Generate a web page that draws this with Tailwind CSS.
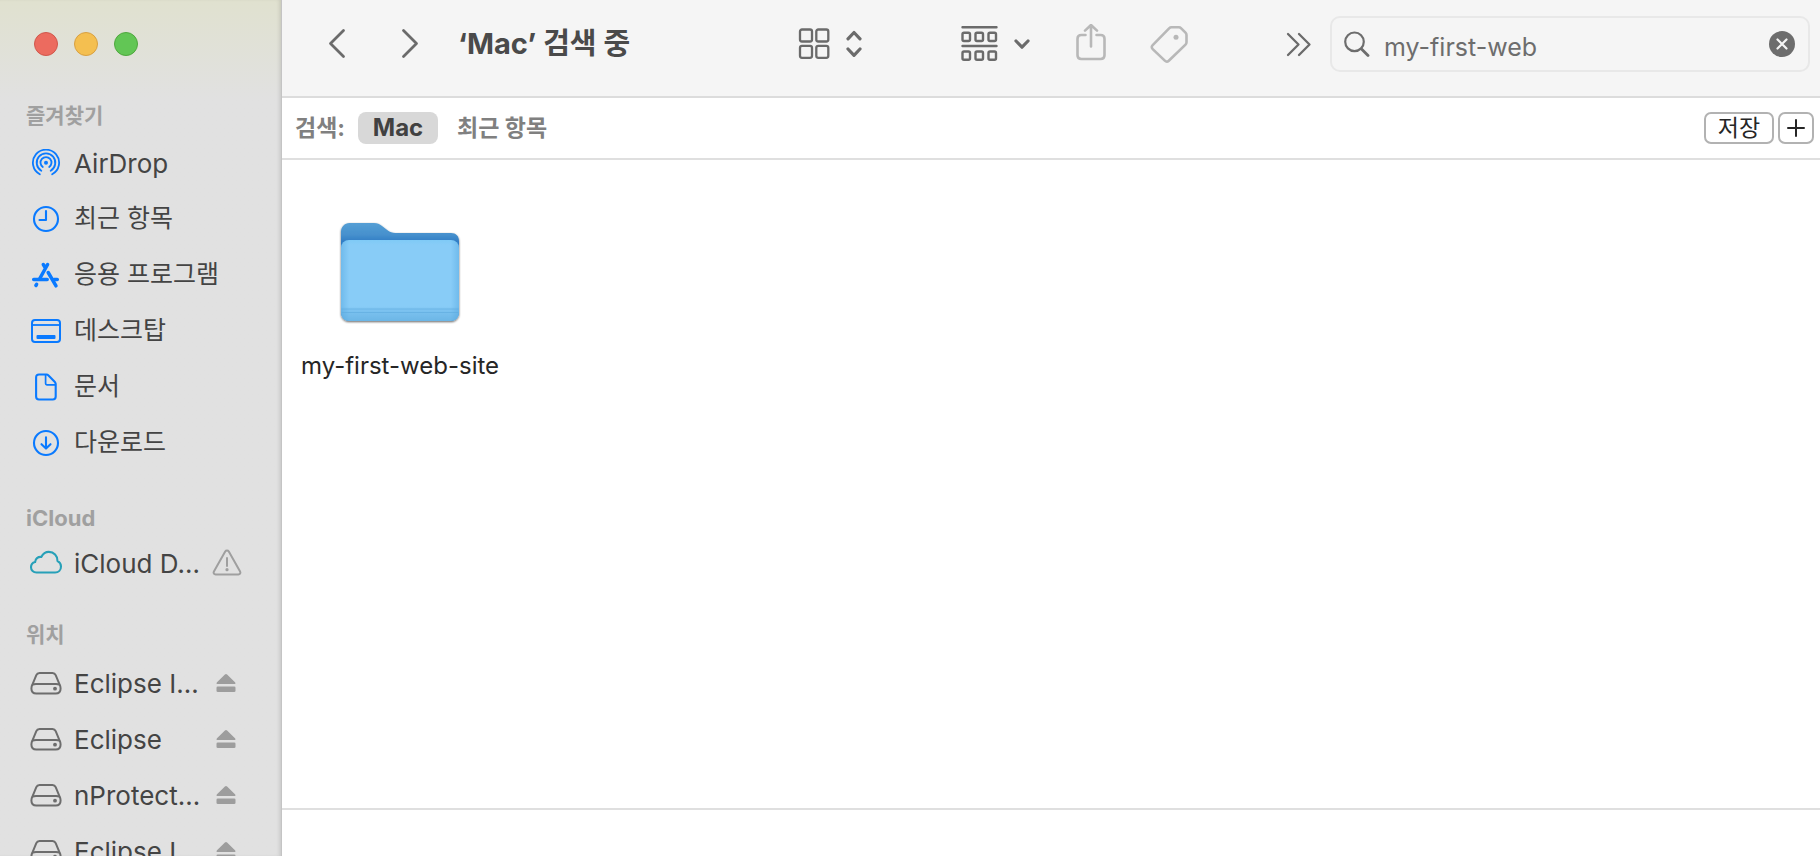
<!DOCTYPE html>
<html lang="ko">
<head>
    <meta charset="UTF-8">
    <meta name="viewport" content="width=device-width, initial-scale=1.0">
    <script src="https://cdn.jsdelivr.net/npm/@tailwindcss/browser@4"></script>
    <title>‘Mac’ 검색 중</title>
</head>
<body class="flex h-screen overflow-hidden bg-white font-['Inter','Noto_Sans_CJK_KR',sans-serif] text-[#444444]">

    <!-- shared icons -->
    <svg class="hidden">
        <symbol id="disk" viewBox="0 0 32 24" fill="none" stroke="#6d6d6d" stroke-width="2">
            <path d="M9.500 2h13c1.600 0 2.600.8 3.200 2.200l4 9.600c.6 1.200.9 2.400.9 3.600 0 3-1.800 5.100-4.900 5.100H6.300c-3.100 0-4.900-2.100-4.900-5.100 0-1.200.3-2.400.9-3.600l4-9.600C6.900 2.800 7.900 2 9.500 2z" />
            <path d="M2.500 13.500C3.500 13 4.500 13 6 13h20c1.500 0 2.500 0 3.500.5" />
            <circle cx="25" cy="17.700" r="1.900" fill="#6d6d6d" stroke="none" />
        </symbol>
        <symbol id="eject" viewBox="0 0 20 20" fill="#9d9d9d">
            <path d="M8.900 1.400 1 9.200c-.9.900-.5 1.800.6 1.800h16.800c1.100 0 1.500-.9.600-1.800l-7.900-7.800c-.7-.7-1.500-.7-2.200 0z" />
            <rect x="0.500" y="13.500" width="19" height="5.500" rx="1.300" />
        </symbol>
    </svg>

    <aside class="w-[282px] shrink-0 border-r border-[#c4c4c4] bg-[#e1e1e1] bg-linear-to-b from-[#e0e1cf] to-[#e1e1e1] to-[100px] shadow-[inset_-3px_0_4px_-2px_#00000022]">
        <div class="flex h-[99px] gap-4 pt-8 pl-[34px]">
            <button aria-label="닫기" class="size-6 rounded-full border border-[#d0574c] bg-[#ec6b5f]"></button>
            <button aria-label="최소화" class="size-6 rounded-full border border-[#d8a042] bg-[#f4bf50]"></button>
            <button aria-label="확대" class="size-6 rounded-full border border-[#4fa73e] bg-[#62c655]"></button>
        </div>

        <nav class="flex flex-col gap-7">
            <section>
                <h2 class="h-9 pl-[26px] text-[21px] leading-[34px] font-bold text-[#a0a0a0]">즐겨찾기</h2>
                <ul class="text-[25px]">
                    <li><a href="#" class="flex h-14 items-center gap-3 pl-[30px] text-[26px]">
                        <svg class="h-7 w-8" viewBox="0 0 32 28" fill="none" stroke="#0a7aff" stroke-width="1.800" stroke-linecap="round">
                            <path d="M9.800 25.300a13.100 13.100 0 1 1 12.400 0" />
                            <path d="M11.300 21.700a9.300 9.300 0 1 1 9.400 0" />
                            <path d="M12.800 18a5.500 5.500 0 1 1 6.400 0" />
                            <circle cx="16" cy="13.700" r="2" fill="#0a7aff" stroke="none" />
                        </svg>
                        <span>AirDrop</span>
                    </a></li>
                    <li><a href="#" class="flex h-14 items-center gap-3 pl-[30px]">
                        <svg class="h-7 w-8" viewBox="0 0 32 28" fill="none" stroke="#0a7aff" stroke-width="2.100" stroke-linecap="round" stroke-linejoin="round">
                            <circle cx="16" cy="14" r="12" />
                            <path d="M16 6v9H9.500" />
                        </svg>
                        <span>최근 항목</span>
                    </a></li>
                    <li><a href="#" class="flex h-14 items-center gap-3 pl-[30px]">
                        <svg class="h-7 w-8" viewBox="0 0 32 28" fill="none" stroke="#0a7aff" stroke-width="3.500" stroke-linecap="round">
                            <path d="M17.600 3.500 9.800 17.500M13.300 3.500l2 3.200M18.200 11.500l7.800 13.300" />
                            <path d="M3.700 18.500h13.500M24 18.500h3.300M6.600 23.300l-.7 1.200" />
                        </svg>
                        <span>응용 프로그램</span>
                    </a></li>
                    <li><a href="#" class="flex h-14 items-center gap-3 pl-[30px]">
                        <svg class="h-7 w-8" viewBox="0 0 32 28" fill="none" stroke="#0a7aff" stroke-width="2">
                            <rect x="2" y="3" width="28" height="22" rx="3" />
                            <path d="M2 8h28" stroke-width="1.800" />
                            <rect x="6.500" y="18" width="19" height="4" rx="1" fill="#0a7aff" stroke="none" />
                        </svg>
                        <span>데스크탑</span>
                    </a></li>
                    <li><a href="#" class="flex h-14 items-center gap-3 pl-[30px]">
                        <svg class="h-7 w-8" viewBox="0 0 32 28" fill="none" stroke="#0a7aff" stroke-width="2.100" stroke-linejoin="round">
                            <path d="M9 1.500h7.500c.8 0 1.400.3 2 .9l6.400 6.700c.5.600.8 1.200.8 2V23.500c0 1.900-1 3-2.900 3H9c-1.900 0-2.900-1.100-2.900-3v-19c0-1.900 1-3 2.900-3z" />
                            <path d="M15.600 1.700v8.800c0 .9.400 1.300 1.300 1.300h8.600" stroke-width="1.700" />
                        </svg>
                        <span>문서</span>
                    </a></li>
                    <li><a href="#" class="flex h-14 items-center gap-3 pl-[30px]">
                        <svg class="h-7 w-8" viewBox="0 0 32 28" fill="none" stroke="#0a7aff" stroke-width="2.100" stroke-linecap="round" stroke-linejoin="round">
                            <circle cx="16" cy="14" r="12" />
                            <path d="M16 8.300v11M11.500 15.200l4.500 4.400 4.500-4.400" />
                        </svg>
                        <span>다운로드</span>
                    </a></li>
                </ul>
            </section>

            <section>
                <h2 class="h-9 pl-[26px] text-[22px] leading-[38px] font-bold text-[#a0a0a0]">iCloud</h2>
                <ul class="text-[26px]">
                    <li><a href="#" class="flex h-14 items-center gap-3 pr-[39px] pl-[30px]">
                        <svg class="h-7 w-8 overflow-visible" viewBox="0 0 32 28" fill="none" stroke="#27a0b8" stroke-width="2.100" stroke-linejoin="round">
                            <path d="M6.500 23.500C3.400 23.500 1 21.300 1 18.300c0-2.500 1.600-4.600 4.100-5.200C5.300 9.700 7.900 7.600 11.300 7.900 12.900 4.800 15.600 2.900 18.800 2.900c5 0 8.900 3.900 8.700 9.200 2.200 1 3.500 3 3.500 5.300 0 3.500-2.500 6.100-5.900 6.100z" />
                        </svg>
                        <span class="flex-1 whitespace-nowrap">iCloud D…</span>
                        <svg class="h-7 w-[30px]" viewBox="0 0 30 28" fill="none" stroke="#9f9f9f" stroke-width="2" stroke-linecap="round" stroke-linejoin="round">
                            <path d="M13.200 2.400c.8-1.300 2.800-1.300 3.600 0l11.300 20c.8 1.400-.1 3-1.700 3H3.600c-1.600 0-2.500-1.600-1.700-3z" />
                            <path d="M15 9v8" />
                            <circle cx="15" cy="20.700" r="1.600" fill="#9f9f9f" stroke="none" />
                        </svg>
                    </a></li>
                </ul>
            </section>

            <section>
                <h2 class="h-9 pl-[26px] text-[21px] leading-8 font-bold text-[#a0a0a0]">위치</h2>
                <ul class="text-[26px]">
                    <li class="flex h-14 items-center pr-[45px] pl-[30px]">
                        <a href="#" class="flex flex-1 items-center gap-3 whitespace-nowrap"><svg class="h-6 w-8"><use href="#disk" /></svg>Eclipse I…</a>
                        <button aria-label="추출"><svg class="size-5"><use href="#eject" /></svg></button>
                    </li>
                    <li class="flex h-14 items-center pr-[45px] pl-[30px]">
                        <a href="#" class="flex flex-1 items-center gap-3 whitespace-nowrap"><svg class="h-6 w-8"><use href="#disk" /></svg>Eclipse</a>
                        <button aria-label="추출"><svg class="size-5"><use href="#eject" /></svg></button>
                    </li>
                    <li class="flex h-14 items-center pr-[45px] pl-[30px]">
                        <a href="#" class="flex flex-1 items-center gap-3 whitespace-nowrap"><svg class="h-6 w-8"><use href="#disk" /></svg>nProtect…</a>
                        <button aria-label="추출"><svg class="size-5"><use href="#eject" /></svg></button>
                    </li>
                    <li class="flex h-14 items-center pr-[45px] pl-[30px]">
                        <a href="#" class="flex flex-1 items-center gap-3 whitespace-nowrap"><svg class="h-6 w-8"><use href="#disk" /></svg>Eclipse I…</a>
                        <button aria-label="추출"><svg class="size-5"><use href="#eject" /></svg></button>
                    </li>
                </ul>
            </section>
        </nav>
    </aside>

    <main class="flex min-w-0 flex-1 flex-col">
        <header class="flex h-[98px] shrink-0 items-center border-b-2 border-[#dcdcdc] bg-[#f5f5f5] pr-[10px] pb-2 pl-[46px]">
            <button aria-label="뒤로" class="mr-[55px]">
                <svg class="h-8 w-[18px]" viewBox="0 0 18 32" fill="none" stroke="#6b6b6b" stroke-width="2.800" stroke-linecap="round" stroke-linejoin="round"><path d="M15.500 2.500 2.500 15.500l13 13" /></svg>
            </button>
            <button aria-label="앞으로" class="mr-[39px]">
                <svg class="h-8 w-[18px]" viewBox="0 0 18 32" fill="none" stroke="#6b6b6b" stroke-width="2.800" stroke-linecap="round" stroke-linejoin="round"><path d="m2.500 2.500 13 13-13 13" /></svg>
            </button>
            <h1 class="flex-1 text-[29px] leading-9 font-bold whitespace-nowrap text-[#4a4a4a]">‘Mac’ 검색 중</h1>

            <button aria-label="아이콘 보기" class="mr-[99px] flex items-center gap-4">
                <svg class="size-8" viewBox="0 0 32 32" fill="none" stroke="#6b6b6b" stroke-width="2.300">
                    <rect x="2" y="1.500" width="12" height="12" rx="2" />
                    <rect x="18.300" y="1.500" width="12" height="12" rx="2" />
                    <rect x="2" y="17.800" width="12" height="12" rx="2" />
                    <rect x="18.300" y="17.800" width="12" height="12" rx="2" />
                </svg>
                <svg class="h-8 w-4" viewBox="0 0 16 32" fill="none" stroke="#6b6b6b" stroke-width="3.200" stroke-linecap="round" stroke-linejoin="round"><path d="m2 10.800 6-6.300 6 6.300M2 21l6 6.300 6-6.300" /></svg>
            </button>
            <button aria-label="그룹" class="mr-[46px] flex items-center gap-4">
                <svg class="h-9 w-[37px]" viewBox="0 0 37 36" fill="none" stroke="#6b6b6b" stroke-width="2.400" stroke-linecap="round">
                    <path d="M1.500 1.300h34M1.500 20h34" />
                    <rect x="1.500" y="6.800" width="7.500" height="8.200" rx="1.500" />
                    <rect x="14.500" y="6.800" width="7.500" height="8.200" rx="1.500" />
                    <rect x="27.500" y="6.800" width="7.500" height="8.200" rx="1.500" />
                    <rect x="1.500" y="25.500" width="7.500" height="8.200" rx="1.500" />
                    <rect x="14.500" y="25.500" width="7.500" height="8.200" rx="1.500" />
                    <rect x="27.500" y="25.500" width="7.500" height="8.200" rx="1.500" />
                </svg>
                <svg class="h-8 w-4" viewBox="0 0 16 32" fill="none" stroke="#6b6b6b" stroke-width="3.200" stroke-linecap="round" stroke-linejoin="round"><path d="m2 13 6 6.200 6-6.200" /></svg>
            </button>
            <button aria-label="공유" class="mr-11">
                <svg class="h-10 w-[30px]" viewBox="0 0 30 40" fill="none" stroke="#b8b8b8" stroke-width="2.600" stroke-linecap="round" stroke-linejoin="round">
                    <path d="M9.500 11H5.300C2.900 11 1.500 12.300 1.500 14.700v16.600c0 2.400 1.400 3.700 3.800 3.700h19.400c2.400 0 3.800-1.300 3.800-3.700V14.700c0-2.400-1.400-3.700-3.800-3.700h-4.200" />
                    <path d="M15 22.500V1.500M9 6.600l6-5.600 6 5.600" />
                </svg>
            </button>
            <button aria-label="태그" class="mr-[97px]">
                <svg class="h-10 w-[39px]" viewBox="0 0 39 40" fill="none" stroke="#b8b8b8" stroke-width="2.600" stroke-linejoin="round">
                    <path d="M21.500 3.300h7.300c1 0 1.700.3 2.400 1l4.300 4.300c.7.700 1 1.400 1 2.400v7.300c0 1-.3 1.700-1 2.400L18.800 36.700c-1.300 1.300-2.700 1.300-4 0L2.700 25.100c-1.300-1.300-1.300-2.700 0-4L19.100 4.300c.7-.7 1.400-1 2.400-1z" />
                    <circle cx="26" cy="13.300" r="2.500" fill="#b8b8b8" stroke="none" />
                </svg>
            </button>
            <button aria-label="더 보기" class="mr-[18px]">
                <svg class="h-7 w-[26px]" viewBox="0 0 26 28" fill="none" stroke="#6b6b6b" stroke-width="2.300" stroke-linecap="round" stroke-linejoin="round"><path d="m2 4 10.500 10.500L2 25M13 4l10.500 10.500L13 25" /></svg>
            </button>
            <div class="flex h-14 w-[480px] items-center rounded-[10px] border-2 border-[#e8e8e8] pr-[13px] pl-3">
                <svg class="size-[26px]" viewBox="0 0 26 26" fill="none" stroke="#6d6d6d" stroke-width="2.200" stroke-linecap="round"><circle cx="10.500" cy="10.800" r="9.300" /><path d="m17.500 18 6.500 6.500" stroke-width="2.800" /></svg>
                <input type="text" aria-label="검색" value="my-first-web" class="ml-[14px] min-w-0 flex-1 pt-[6px] text-[25px] leading-9 text-[#6d6d6d] outline-none">
                <button aria-label="지우기">
                    <svg class="size-[26px]" viewBox="0 0 26 26"><circle cx="13" cy="13" r="13" fill="#6d6d6d" /><path d="m8.500 8.500 9 9M17.500 8.500l-9 9" stroke="#f5f5f5" stroke-width="2.200" stroke-linecap="round" /></svg>
                </button>
            </div>
        </header>

        <div class="flex h-[62px] shrink-0 items-center border-b-2 border-[#dfdfdf] pr-[6px] pl-[13px] text-[23px] leading-8 font-bold text-[#808080]">
            <span>검색:</span>
            <button class="ml-[13px] h-8 w-20 rounded-lg bg-[#d8d8d8] text-2xl leading-8 text-[#414141]">Mac</button>
            <button class="ml-[19px]">최근 항목</button>
            <button class="ml-auto h-8 w-[70px] rounded-[7px] border-2 border-[#b2b2b2] leading-[26px] font-normal text-[#262626]">저장</button>
            <button aria-label="조건 추가" class="ml-1 flex h-8 w-9 items-center justify-center rounded-[7px] border-2 border-[#b2b2b2]">
                <svg class="size-5" viewBox="0 0 20 20" stroke="#262626" stroke-width="2" stroke-linecap="round"><path d="M10 2v16M2 10h16" /></svg>
            </button>
        </div>

        <div class="flex-1 pt-[60px] pl-[18px]">
            <a href="#" class="flex w-[200px] flex-col items-center text-[#262626]">
                <svg class="h-[108px] w-[124px]" viewBox="0 0 124 108">
                    <defs>
                        <linearGradient id="back" x1="0" y1="0" x2="0" y2="1">
                            <stop offset="0" stop-color="#559fd5" />
                            <stop offset="0.120" stop-color="#4690cd" />
                            <stop offset="0.200" stop-color="#2e7bc4" />
                        </linearGradient>
                        <linearGradient id="front" x1="0" y1="0" x2="0" y2="1">
                            <stop offset="0" stop-color="#7fcaf6" />
                            <stop offset="0.060" stop-color="#88ccf7" />
                            <stop offset="0.820" stop-color="#88ccf7" />
                            <stop offset="0.870" stop-color="#7bc2f0" />
                            <stop offset="1" stop-color="#6cb6e6" />
                        </linearGradient>
                        <linearGradient id="edge" x1="0" y1="0" x2="1" y2="0">
                            <stop offset="0" stop-color="#4ba0db" stop-opacity="0.400" />
                            <stop offset="0.070" stop-color="#4ba0db" stop-opacity="0" />
                            <stop offset="0.930" stop-color="#4ba0db" stop-opacity="0" />
                            <stop offset="1" stop-color="#4ba0db" stop-opacity="0.400" />
                        </linearGradient>
                        <filter id="shade" x="-10%" y="-10%" width="120%" height="125%">
                            <feDropShadow dx="0" dy="1" stdDeviation="1" flood-color="#000000" flood-opacity="0.600" />
                        </filter>
                    </defs>
                    <g filter="url(#shade)">
                        <path d="M3 12c0-5 3.500-9 8.500-9H36c3.500 0 5.500 1 8 3l5.500 4.300c2.500 2 4.500 2.700 8 2.700H113c5 0 8 3 8 8v71c0 5-4 9-9 9H12c-5 0-9-4-9-9z" fill="url(#back)" />
                        <rect x="3" y="20" width="118" height="81" rx="8" fill="url(#front)" />
                    </g>
                    <rect x="3" y="20" width="118" height="81" rx="8" fill="url(#edge)" />
                    <path d="M3.500 89h117M3.500 92.500h117" stroke="#5eaade" stroke-opacity="0.600" stroke-width="1" />
                </svg>
                <span class="mt-5 text-[24px] leading-9 whitespace-nowrap">my-first-web-site</span>
            </a>
        </div>

        <footer class="h-12 shrink-0 border-t-2 border-[#dfdfdf]"></footer>
    </main>

</body>
</html>
